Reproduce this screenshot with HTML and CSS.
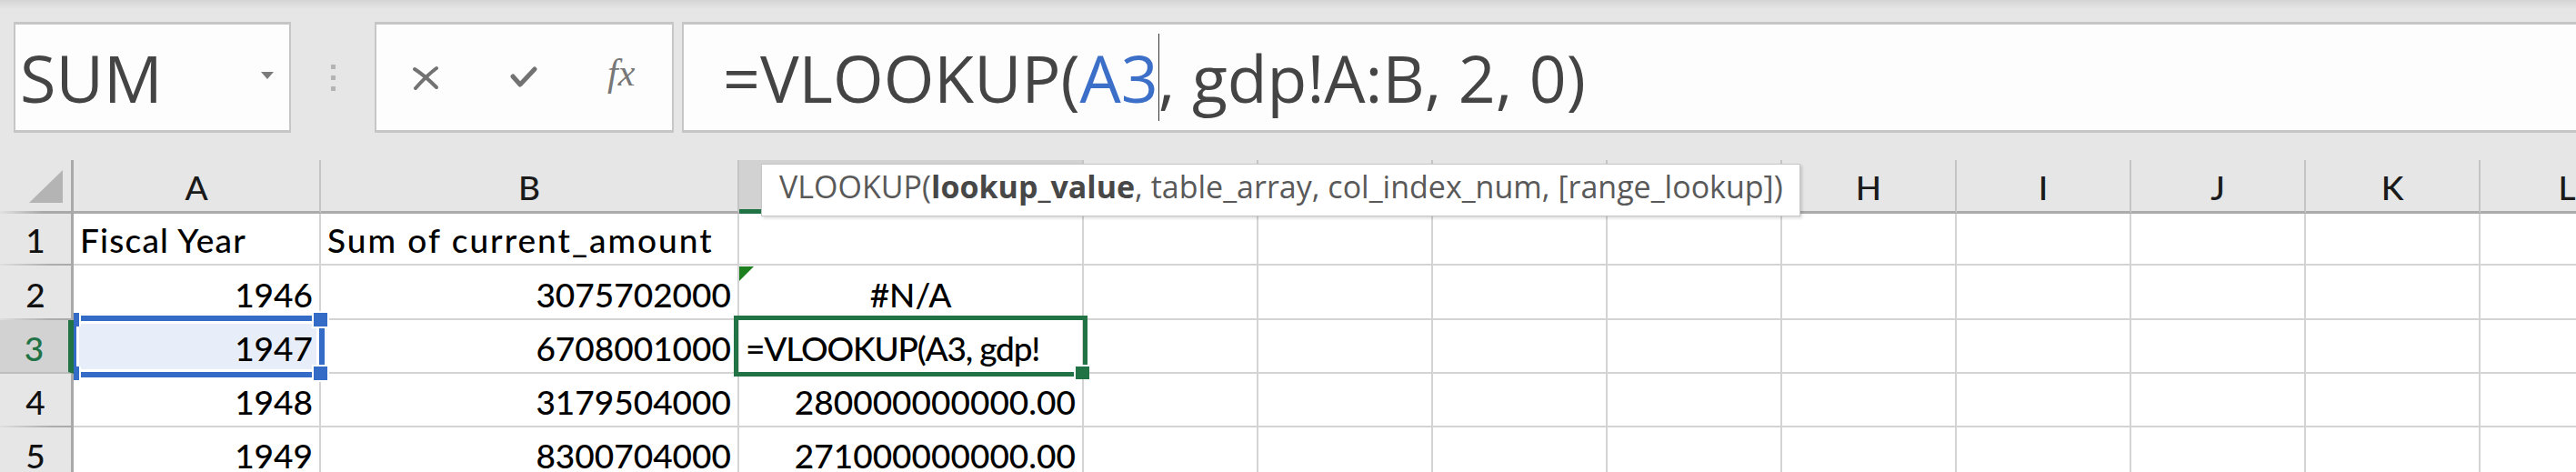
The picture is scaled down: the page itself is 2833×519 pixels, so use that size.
FILE: index.html
```html
<!DOCTYPE html>
<html>
<head>
<meta charset="utf-8">
<link rel="stylesheet" href="styles.css">
</head>
<body>
<div class="fbar">
  <div class="namebox"><span class="name">SUM</span><span class="caret"></span></div>
  <div class="grip"><i></i><i></i><i></i></div>
  <div class="fxbox">
    <svg class="ico" width="30" height="27" viewBox="0 0 30 27"><path d="M3 4 C 11 9, 19 16, 27 24" /><path d="M27 3 C 19 9, 11 17, 4 25" /></svg>
    <svg class="ico chk" width="30" height="26" viewBox="0 0 30 26"><path d="M3 12 L11 21 L27 4" /></svg>
    <span class="fx">fx</span>
  </div>
  <div class="formula"><span>=VLOOKUP(</span><span class="ref">A3</span><span class="cursor"></span><span>, gdp!A:B, 2, 0)</span></div>
</div>
<div class="sheet">
  <div class="corner"><span class="tri"></span></div>
  <div class="ch">A</div><div class="ch">B</div><div class="ch sel"></div><div class="ch"></div><div class="ch"></div><div class="ch"></div><div class="ch"></div><div class="ch">H</div><div class="ch">I</div><div class="ch">J</div><div class="ch">K</div><div class="ch">L</div>

  <div class="rh">1</div>
  <div class="c sp1">Fiscal Year</div><div class="c sp2">Sum of current_amount</div><div class="c"></div>
  <div class="c"></div><div class="c"></div><div class="c"></div><div class="c"></div><div class="c"></div><div class="c"></div><div class="c"></div><div class="c"></div><div class="c"></div>

  <div class="rh">2</div>
  <div class="c r">1946</div><div class="c r">3075702000</div><div class="c ctr err">#N/A</div>
  <div class="c"></div><div class="c"></div><div class="c"></div><div class="c"></div><div class="c"></div><div class="c"></div><div class="c"></div><div class="c"></div><div class="c"></div>

  <div class="rh sel">3</div>
  <div class="c r hl">1947</div><div class="c r">6708001000</div><div class="c edit">=VLOOKUP(A3, gdp!</div>
  <div class="c"></div><div class="c"></div><div class="c"></div><div class="c"></div><div class="c"></div><div class="c"></div><div class="c"></div><div class="c"></div><div class="c"></div>

  <div class="rh">4</div>
  <div class="c r">1948</div><div class="c r">3179504000</div><div class="c r">280000000000.00</div>
  <div class="c"></div><div class="c"></div><div class="c"></div><div class="c"></div><div class="c"></div><div class="c"></div><div class="c"></div><div class="c"></div><div class="c"></div>

  <div class="rh">5</div>
  <div class="c r">1949</div><div class="c r">8300704000</div><div class="c r">271000000000.00</div>
  <div class="c"></div><div class="c"></div><div class="c"></div><div class="c"></div><div class="c"></div><div class="c"></div><div class="c"></div><div class="c"></div><div class="c"></div>

  <div class="range"></div>
  <div class="hd hd-tl"></div><div class="hd hd-bl"></div><div class="hd hd-tr"></div><div class="hd hd-br"></div>
  <div class="active"></div>
  <div class="fill"></div>
  <div class="tip">VLOOKUP(<b>lookup_value</b>, table_array, col_index_num, [range_lookup])</div>
</div>
</body>
</html>
```
FILE: styles.css
```css
* { box-sizing: border-box; }
html, body { margin: 0; padding: 0; }
body {
  width: 2833px;
  height: 519px;
  overflow: hidden;
  background: #e6e6e6;
}

/* ---------- formula bar ---------- */
.fbar {
  height: 176px;
  display: flex;
  align-items: flex-start;
  padding-top: 24px;
  padding-left: 15px;
  background: linear-gradient(#d4d4d4, #e6e6e6 10px);
}
.namebox, .fxbox, .formula {
  height: 122px;
  background: #fdfdfd;
  border: 3px solid #c6c6c6;
  border-left-width: 2px;
  border-right-width: 2px;
  display: flex;
  align-items: center;
  flex-shrink: 0;
}
.namebox {
  width: 305px;
  padding-left: 5px;
}
.name {
  font-family: "Open Sans", sans-serif;
  font-size: 72px;
  line-height: 72px;
  color: #444;
}
.caret {
  margin-left: auto;
  margin-right: 17px;
  margin-bottom: 4px;
  width: 0;
  height: 0;
  border-left: 7px solid transparent;
  border-right: 7px solid transparent;
  border-top: 8px solid #7b7b7b;
}
.grip {
  width: 92px;
  height: 122px;
  flex-shrink: 0;
  display: flex;
  flex-direction: column;
  align-items: center;
  justify-content: center;
  gap: 7px;
}
.grip i {
  display: block;
  width: 5px;
  height: 5px;
  background: #b4b4b4;
}
.fxbox {
  width: 329px;
  padding-left: 39px;
  gap: 78px;
}
.ico path {
  fill: none;
  stroke: #727272;
  stroke-width: 4;
  stroke-linecap: round;
}
.ico.chk path {
  stroke-width: 5;
  stroke-linejoin: round;
  stroke-linecap: round;
}
.fx {
  margin-left: -1px;
  margin-bottom: 10px;
  font-family: "Liberation Serif", serif;
  font-style: italic;
  font-size: 42px;
  line-height: 42px;
  color: #777;
}
.formula {
  margin-left: 9px;
  width: 2200px;
  border-right: none;
  padding-left: 43px;
  font-family: "Open Sans", sans-serif;
  font-size: 71.6px;
  line-height: 72px;
  color: #444;
  white-space: pre;
}
.formula .ref { color: #3b6fc8; }
.cursor {
  display: inline-block;
  width: 1px;
  height: 96px;
  margin-right: -1px;
  background: #333;
  align-self: center;
}

/* ---------- sheet ---------- */
.sheet {
  position: relative;
  width: 2920px;
  display: grid;
  grid-template-columns: 81px 272px 460px 379px repeat(9, 192px);
  grid-template-rows: 59px 57px 60px 59px 59px 59px;
  font-family: Lato, "Liberation Sans", sans-serif;
  font-size: 37px;
  font-weight: 500;
  line-height: 37px;
}
.c, .ch, .rh, .corner {
  display: flex;
  align-items: flex-end;
  white-space: nowrap;
  overflow: hidden;
}
.c {
  background: #fff;
  color: #000;
  border-right: 2px solid #d4d4d4;
  border-bottom: 2px solid #d4d4d4;
  padding: 0 7px 8px;
}
.c.r { justify-content: flex-end; }
.c.ctr { justify-content: center; }
.c.hl { background: #e8eef9; }
.c.sp1 { letter-spacing: 1.2px; }
.c.sp2 { letter-spacing: 2px; }
.c.edit { letter-spacing: -1.2px; }
.c.err { position: relative; }
.c.err::before {
  content: "";
  position: absolute;
  left: 0;
  top: 1px;
  width: 0;
  height: 0;
  border-top: 16px solid #1d7f1d;
  border-right: 16px solid transparent;
}
.ch {
  background: #e6e6e6;
  color: #1a1a1a;
  justify-content: center;
  border-right: 2px solid #c4c4c4;
  border-bottom: 3px solid #ababab;
  padding-bottom: 8px;
}
.ch.sel {
  background: #d2d2d2;
  border-bottom: 5px solid #217346;
  padding-bottom: 6px;
}
.corner {
  background: #e6e6e6;
  border-right: 3px solid #a9a9a9;
  border-bottom: 3px solid #ababab;
  border-image: linear-gradient(to right, #e2e2e2, #a9a9a9 60%) 1;
  justify-content: flex-end;
  padding: 0 9px 9px 0;
}
.tri {
  width: 0;
  height: 0;
  border-left: 37px solid transparent;
  border-bottom: 36px solid #b4b4b4;
}
.rh {
  background: #e6e6e6;
  color: #111;
  justify-content: center;
  border-right: 3px solid #a9a9a9;
  border-bottom: 2px solid #c8c8c8;
  border-image: linear-gradient(to right, #e0e0e0, #adadad 70%, #a9a9a9) 1;
  padding-bottom: 8px;
}
.rh.sel {
  background: #d2d2d2;
  color: #217346;
  border-image: none;
  border-right: 6px solid #217346;
  border-bottom: 2px solid #bdbdbd;
}

/* ---------- overlays ---------- */
.range {
  position: absolute;
  left: 81px;
  top: 171px;
  width: 276px;
  height: 68px;
  border: 6px solid #336bc7;
  border-left-width: 3px;
  box-shadow: inset 0 0 0 3px #fff;
}
.hd {
  position: absolute;
  width: 15px;
  height: 15px;
  background: #336bc7;
  box-shadow: 0 0 0 2px #fff;
}
.hd-tr { left: 345px; top: 168px; }
.hd-br { left: 345px; top: 227px; }
.hd-tl { left: 81px; top: 168px; width: 6px; box-shadow: 2px 0 0 0 #fff; }
.hd-bl { left: 81px; top: 227px; width: 6px; box-shadow: 2px 0 0 0 #fff; }
.active {
  position: absolute;
  left: 807px;
  top: 171px;
  width: 389px;
  height: 67px;
  border: 5px solid #217346;
}
.fill {
  position: absolute;
  left: 1183px;
  top: 227px;
  width: 15px;
  height: 14px;
  background: #217346;
  box-shadow: -2px -2px 0 0 #fff;
}
.tip {
  position: absolute;
  left: 837px;
  top: 4px;
  width: 1143px;
  height: 58px;
  background: #fff;
  border: 1px solid #c6c6c6;
  box-shadow: 2px 2px 3px rgba(0, 0, 0, 0.15);
  display: flex;
  align-items: center;
  padding-left: 19px;
  padding-bottom: 9px;
  font-family: "Open Sans", sans-serif;
  font-size: 34px;
  line-height: 34px;
  color: #595959;
  white-space: pre;
}
.tip b {
  font-weight: 700;
  color: #474747;
}
```
